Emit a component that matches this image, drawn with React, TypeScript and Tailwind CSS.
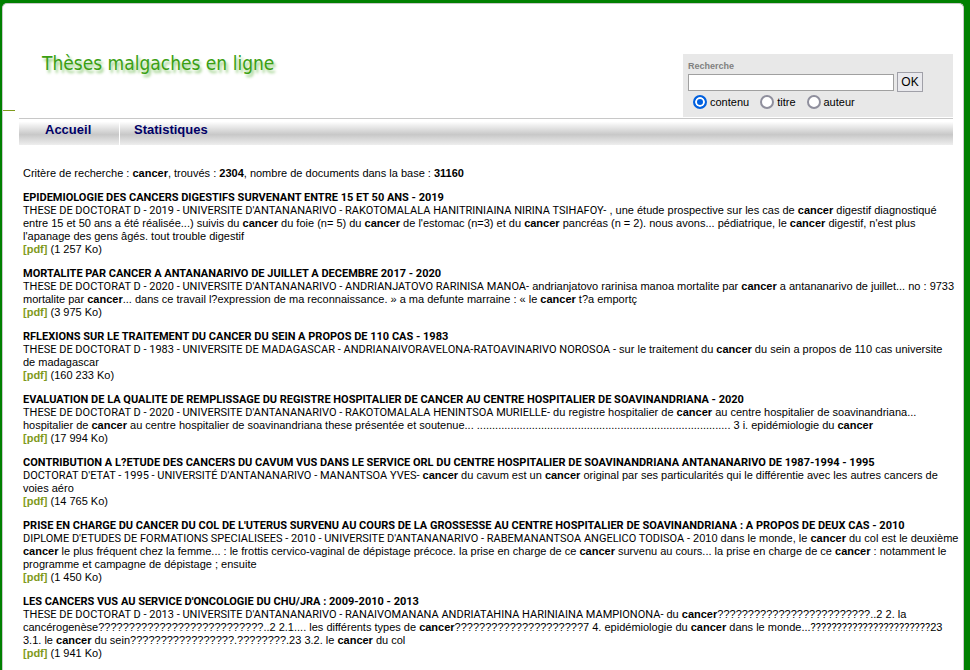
import { Fragment } from "react";

type Result = {
  title: string;
  record: string;
  // Text between asterisks is a search hit, shown in bold;
  // text between tildes is filler, set in the narrower face.
  lines: string[];
  size: string;
};

const results: Result[] = [
  {
    title: "EPIDEMIOLOGIE DES CANCERS DIGESTIFS SURVENANT ENTRE 15 ET 50 ANS - 2019",
    record: "THESE DE DOCTORAT D - 2019 - UNIVERSITE D'ANTANANARIVO - RAKOTOMALALA HANITRINIAINA NIRINA TSIHAFOY-",
    lines: [
      " , une étude prospective sur les cas de *cancer* digestif diagnostiqué",
      "entre 15 et 50 ans a été réalisée...) suivis du *cancer* du foie (n= 5) du *cancer* de l'estomac (n=3) et du *cancer* pancréas (n = 2). nous avons... pédiatrique, le *cancer* digestif, n'est plus",
      "l'apanage des gens âgés. tout trouble digestif",
    ],
    size: "1 257 Ko",
  },
  {
    title: "MORTALITE PAR CANCER A ANTANANARIVO DE JUILLET A DECEMBRE 2017 - 2020",
    record: "THESE DE DOCTORAT D - 2020 - UNIVERSITE D'ANTANANARIVO - ANDRIANJATOVO RARINISA MANOA-",
    lines: [
      " andrianjatovo rarinisa manoa mortalite par *cancer* a antananarivo de juillet... no : 9733",
      "mortalite par *cancer*... dans ce travail l?expression de ma reconnaissance. » a ma defunte marraine : « le *cancer* t?a emportç",
    ],
    size: "3 975 Ko",
  },
  {
    title: "RFLEXIONS SUR LE TRAITEMENT DU CANCER DU SEIN A PROPOS DE 110 CAS - 1983",
    record: "THESE DE DOCTORAT D - 1983 - UNIVERSITE DE MADAGASCAR - ANDRIANAIVORAVELONA-RATOAVINARIVO NOROSOA -",
    lines: [" sur le traitement du *cancer* du sein a propos de 110 cas universite", "de madagascar"],
    size: "160 233 Ko",
  },
  {
    title:
      "EVALUATION DE LA QUALITE DE REMPLISSAGE DU REGISTRE HOSPITALIER DE CANCER AU CENTRE HOSPITALIER DE SOAVINANDRIANA - 2020",
    record: "THESE DE DOCTORAT D - 2020 - UNIVERSITE D'ANTANANARIVO - RAKOTOMALALA HENINTSOA MURIELLE-",
    lines: [
      " du registre hospitalier de *cancer* au centre hospitalier de soavinandriana...",
      "hospitalier de *cancer* au centre hospitalier de soavinandriana these présentée et soutenue... " +
        ".".repeat(83) +
        " 3 i. epidémiologie du *cancer*",
    ],
    size: "17 994 Ko",
  },
  {
    title:
      "CONTRIBUTION A L?ETUDE DES CANCERS DU CAVUM VUS DANS LE SERVICE ORL DU CENTRE HOSPITALIER DE SOAVINANDRIANA ANTANANARIVO DE 1987-1994 - 1995",
    record: "DOCTORAT D'ETAT - 1995 - UNIVERSITÉ D'ANTANANARIVO - MANANTSOA YVES-",
    lines: [
      " *cancer* du cavum est un *cancer* original par ses particularités qui le différentie avec les autres cancers de",
      "voies aéro",
    ],
    size: "14 765 Ko",
  },
  {
    title:
      "PRISE EN CHARGE DU CANCER DU COL DE L'UTERUS SURVENU AU COURS DE LA GROSSESSE AU CENTRE HOSPITALIER DE SOAVINANDRIANA : A PROPOS DE DEUX CAS - 2010",
    record:
      "DIPLOME D'ETUDES DE FORMATIONS SPECIALISEES - 2010 - UNIVERSITE D'ANTANANARIVO - RABEMANANTSOA ANGELICO TODISOA -",
    lines: [
      " 2010 dans le monde, le *cancer* du col est le deuxième",
      "*cancer* le plus fréquent chez la femme... : le frottis cervico-vaginal de dépistage précoce. la prise en charge de ce *cancer* survenu au cours... la prise en charge de ce *cancer* : notamment le",
      "programme et campagne de dépistage ; ensuite",
    ],
    size: "1 450 Ko",
  },
  {
    title: "LES CANCERS VUS AU SERVICE D'ONCOLOGIE DU CHU/JRA : 2009-2010 - 2013",
    record: "THESE DE DOCTORAT D - 2013 - UNIVERSITE D'ANTANANARIVO - RANAIVOMANANA ANDRIATAHINA HARINIAINA MAMPIONONA-",
    lines: [
      " du *cancer*" + "?".repeat(25) + "..2 2. la",
      "cancérogenèse" +
        "?".repeat(27) +
        "..2 2.1.... les différents types de *cancer*" +
        "?".repeat(21) +
        "7 4. epidémiologie du *cancer* dans le monde...~" +
        "?".repeat(23) +
        "~23",
      "3.1. le *cancer* du sein" + "?".repeat(17) + "." + "?".repeat(8) + ".23 3.2. le *cancer* du col",
    ],
    size: "1 941 Ko",
  },
];

function Marked({ text }: { text: string }) {
  return (
    <>
      {text.split(/(\*[^*]+\*|~[^~]+~)/).map((part, i) => {
        if (part.startsWith("*")) return <b key={i}>{part.slice(1, -1)}</b>;
        if (part.startsWith("~"))
          return (
            <span key={i} className="font-['Roboto',sans-serif]">
              {part.slice(1, -1)}
            </span>
          );
        return <Fragment key={i}>{part}</Fragment>;
      })}
    </>
  );
}

function ResultItem({ result }: { result: Result }) {
  return (
    <li>
      <h2 className="font-['Roboto',sans-serif] font-bold">{result.title}</h2>
      <p>
        <span className="font-['Roboto',sans-serif]">{result.record}</span>
        {result.lines.map((line, i) => (
          <Fragment key={i}>
            {i > 0 && <br />}
            <Marked text={line} />
          </Fragment>
        ))}
      </p>
      <p>
        <a href="#pdf" className="font-bold text-[#7f9a1c]">
          [pdf]
        </a>{" "}
        ({result.size})
      </p>
    </li>
  );
}

function Choice({ value, checked }: { value: string; checked?: boolean }) {
  return (
    <label className="flex items-center gap-[3px]">
      <input
        type="radio"
        name="champ"
        value={value}
        defaultChecked={checked}
        className="size-3.5 appearance-none rounded-full border-2 border-[#8f8f9d] bg-white checked:border-[#0060df] checked:bg-[#0060df] checked:shadow-[inset_0_0_0_2px_#fff]"
      />
      {value}
    </label>
  );
}

export default function App() {
  return (
    <div className="flex min-h-screen flex-col bg-[#008000] pt-[3px] pr-[6px] pl-[2px] font-['Liberation_Sans',Arial,sans-serif] text-[11px] leading-[13px] text-black">
      <div className="flex-1 rounded-t-[5px] border border-b-0 border-[#c8c8c8] bg-white">
        <header className="flex items-end justify-between pt-[47px] pr-2.5">
          <div className="flex flex-col">
            <h1 className="pl-[39px] font-['DejaVu_Sans_Condensed','DejaVu_Sans',sans-serif] text-[19px] leading-[24px] text-[#3a9f12] [text-shadow:2px_3px_3px_#8fcb78]">
              Thèses malgaches en ligne
            </h1>
            <div className="mt-[35px] mb-1.5 h-px w-3 shrink-0 bg-[#7f9a1c]" />
          </div>
          <form className="w-[270px] bg-[#e8e8e8] px-[5px] pt-[7px] pb-2" onSubmit={(e) => e.preventDefault()}>
            <label htmlFor="q" className="block text-[9px] leading-[11px] font-bold text-[#808080]">
              Recherche
            </label>
            <div className="flex items-center gap-[3px]">
              <input id="q" type="text" className="h-[17px] w-[206px] border border-[#a0a0a0] bg-white px-1" />
              <button type="submit" className="h-5 w-[26px] border border-[#a0a0a8] bg-[#e9e9ed] text-[12px]">
                OK
              </button>
            </div>
            <div className="mt-[3px] flex gap-[11px] pl-[5px]">
              <Choice value="contenu" checked />
              <Choice value="titre" />
              <Choice value="auteur" />
            </div>
          </form>
        </header>
        <nav className="mt-px mr-2.5 ml-4 flex h-[27px] border-t border-[#c8c8c8] bg-linear-to-b from-white from-10% via-[#c8c8c8] via-60% to-[#eeeeee] text-[13px] leading-[22px] font-bold text-[#000066]">
          <a href="#accueil" className="w-[101px] border-r border-white pl-[26px]">
            Accueil
          </a>
          <a href="#statistiques" className="pl-3.5">
            Statistiques
          </a>
        </nav>
        <main className="pt-[22px] pb-2 pl-5">
          <p>
            Critère de recherche : <b>cancer</b>, trouvés : <b>2304</b>, nombre de documents dans la base : <b>31160</b>
          </p>
          <ul className="mt-[11px] flex flex-col gap-[11px]">
            {results.map((result) => (
              <ResultItem key={result.title} result={result} />
            ))}
          </ul>
        </main>
      </div>
    </div>
  );
}
